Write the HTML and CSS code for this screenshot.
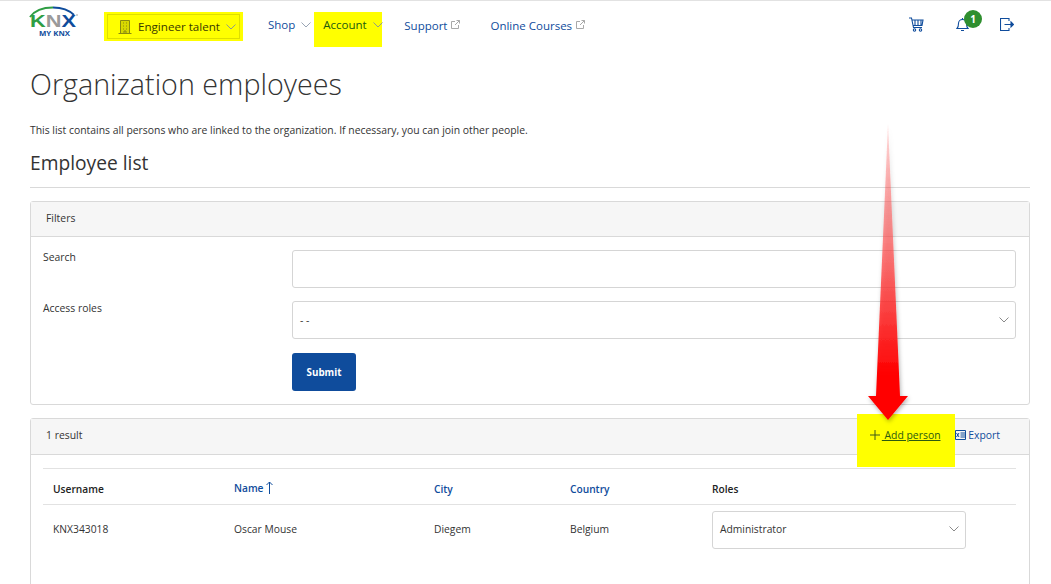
FILE: index.html
```html
<!DOCTYPE html>
<html lang="en">
<head>
    <meta charset="UTF-8">
    <title>Organization employees</title>
    <link rel="stylesheet" href="styles.css">
</head>
<body>
    <header class="topbar">
        <svg class="logo" width="50" height="34" viewBox="0 0 50 34">
            <path d="M1 11 C6 4 14 1.500 24 1.500" fill="none" stroke="#2f9e44" stroke-width="2"/>
            <path d="M24 1.500 C33 1.500 40 4 45 9" fill="none" stroke="#0f4c9c" stroke-width="2"/>
            <circle cx="48" cy="9" r="0.800" fill="#9a9a9a"/>
            <text class="logo-word" x="1" y="21" textLength="46" lengthAdjust="spacingAndGlyphs"><tspan fill="#2f9e44">K</tspan><tspan fill="#9a9a9a">N</tspan><tspan fill="#0f4c9c">X</tspan></text>
            <text class="logo-sub" x="10" y="30" textLength="31" lengthAdjust="spacingAndGlyphs">MY KNX</text>
        </svg>
        <div class="org-mark">
            <div class="org-select">
                <svg width="14" height="15" viewBox="0 0 14 15" fill="#d8d800" stroke="#8a8a10" stroke-width="1">
                    <path d="M2.500 14V1.500h9V14M0.500 14.500h13M5 4h1M8 4h1M5 7h1M8 7h1M5 10h1M8 10h1M6 14v-2h2v2"/>
                </svg>
                <span>Engineer talent</span>
                <svg class="chev" width="10" height="6" viewBox="0 0 10 6"><path d="M.5.500L5 5 9.500.500" fill="none" stroke="#8c9b8c"/></svg>
            </div>
        </div>
        <nav class="nav">
            <a class="nav-item">Shop <svg class="chev" width="10" height="6" viewBox="0 0 10 6"><path d="M.5.500L5 5 9.500.500" fill="none" stroke="#9aa5b5"/></svg></a>
            <a class="nav-item nav-mark">Account <svg class="chev" width="10" height="6" viewBox="0 0 10 6"><path d="M.5.500L5 5 9.500.500" fill="none" stroke="#8c9b8c"/></svg></a>
            <a class="nav-item nav-support">Support <svg class="ext" width="9" height="9" viewBox="0 0 9 9"><path d="M4 1.500H.5v7h7V5M4 5l4.500-4.500M5.500.500h3v3" fill="none" stroke="#a9a9a9"/></svg></a>
            <a class="nav-item nav-courses">Online Courses <svg class="ext" width="9" height="9" viewBox="0 0 9 9"><path d="M4 1.500H.5v7h7V5M4 5l4.500-4.500M5.500.500h3v3" fill="none" stroke="#a9a9a9"/></svg></a>
        </nav>
        <div class="tools">
            <svg class="cart" width="15" height="15" viewBox="0 0 15 15" fill="none" stroke="#0f4c9c" stroke-width="1.100">
                <path d="M0 1h2.500l2 9.500h8.500M3 3h11l-1 5.500H4.200M6 3v5.500M9 3v5.500M12 3v5.500"/>
                <circle cx="5.500" cy="13" r="1.200"/><circle cx="11.500" cy="13" r="1.200"/>
            </svg>
            <div class="bell">
                <svg width="13" height="14" viewBox="0 0 13 14" fill="none" stroke="#0f4c9c" stroke-width="1.100">
                    <path d="M1 10.500c1.500-1.500 1.500-3 1.500-5a4 4 0 0 1 8 0c0 2 0 3.500 1.500 5zM5 12.500h3M6.500 1v-1"/>
                </svg>
                <span class="badge">1</span>
            </div>
            <svg width="14" height="13" viewBox="0 0 14 13" fill="none" stroke="#0f4c9c" stroke-width="1.100">
                <path d="M9 3V.5H.5v12H9V10M4.500 6.500h7"/><path d="M11 4l2.500 2.500L11 9z" fill="#0f4c9c"/>
            </svg>
        </div>
    </header>

    <main class="page">
        <h1>Organization employees</h1>
        <p class="intro">This list contains all persons who are linked to the organization. If necessary, you can join other people.</p>
        <h2>Employee list</h2>

        <section class="card">
            <div class="card-head">Filters</div>
            <form class="filters">
                <label>Search</label>
                <div class="input"></div>
                <label>Access roles</label>
                <div class="input select">- -
                    <svg class="chev" width="10" height="6" viewBox="0 0 10 6"><path d="M.5.500L5 5 9.500.500" fill="none" stroke="#8a8a8a"/></svg>
                </div>
                <div></div>
                <div><button type="button" class="btn">Submit</button></div>
            </form>
        </section>

        <section class="card results">
            <div class="card-head result-head">
                <span>1 result</span>
                <div class="actions">
                    <a class="add"><svg width="10" height="10" viewBox="0 0 10 10"><path d="M5 0v10M0 5h10" stroke="#3d5a1a"/></svg>&nbsp;Add person</a>
                    <a class="export">
                        <svg width="11" height="10" viewBox="0 0 11 10" fill="none" stroke="#0f4c9c"><path d="M.5.500h10v9H.5zM5.500 3h5M5.500 5h5M5.500 7h5M1.500 3l2.500 4M4 3L1.500 7"/></svg>
                        Export</a>
                </div>
            </div>
            <div class="table-wrap">
                <table>
                    <thead>
                        <tr>
                            <th class="col-user">Username</th>
                            <th class="col-name sort"><span class="name-sort">Name <svg class="arrow" width="7" height="13" viewBox="0 0 7 13" fill="none" stroke="#0f4c9c"><path d="M3.500 13V1M.5 4l3-3 3 3"/></svg></span></th>
                            <th class="col-city sort">City</th>
                            <th class="col-country sort">Country</th>
                            <th>Roles</th>
                        </tr>
                    </thead>
                    <tbody>
                        <tr>
                            <td>KNX343018</td>
                            <td>Oscar Mouse</td>
                            <td>Diegem</td>
                            <td>Belgium</td>
                            <td class="role-cell"><div class="input role">Administrator
                                <svg class="chev" width="10" height="6" viewBox="0 0 10 6"><path d="M.5.500L5 5 9.500.500" fill="none" stroke="#8a8a8a"/></svg>
                            </div></td>
                        </tr>
                    </tbody>
                </table>
            </div>
        </section>
    </main>

    <svg class="big-arrow" width="60" height="310" viewBox="0 0 60 310">
        <defs>
            <linearGradient id="fade" x1="0" y1="0" x2="0" y2="1">
                <stop offset="0" stop-color="#ff3030" stop-opacity="0.15"/>
                <stop offset="0.35" stop-color="#ff5050" stop-opacity="0.6"/>
                <stop offset="0.85" stop-color="#ff0000"/>
            </linearGradient>
            <filter id="shadow" x="-30%" y="-5%" width="160%" height="110%">
                <feDropShadow dx="1" dy="2" stdDeviation="2" flood-color="#000" flood-opacity="0.3"/>
            </filter>
        </defs>
        <path d="M30 3 L18 275 H10 L30 299 L50 275 H42 Z" fill="url(#fade)" filter="url(#shadow)"/>
    </svg>
</body>
</html>
```

FILE: styles.css
```css
* {
    box-sizing: border-box;
}
html, body {
    height: 584px;
    overflow: hidden;
}
body {
    margin: 0;
    background: #fff;
    color: #333;
    font-family: "Open Sans", "Noto Sans", sans-serif;
    font-size: 10.4px;
    border-top: 1px solid #e2e2e2;
    position: relative;
}
.topbar {
    display: flex;
    align-items: flex-start;
    height: 50px;
    padding-left: 29px;
}
.logo {
    flex: none;
    margin-top: 5px;
}
.logo-word {
    font-family: "Liberation Sans", sans-serif;
    font-weight: 700;
    font-size: 17px;
}
.logo-sub {
    fill: #0f4c9c;
    font-size: 7.500px;
    font-weight: 700;
}
.org-mark {
    background: #ffff00;
    margin: 11px 0 0 25px;
    padding: 2px 3px;
    width: 139px;
    height: 29px;
}
.org-select {
    display: flex;
    align-items: center;
    gap: 6px;
    height: 25px;
    border: 1px solid #dede00;
    padding-left: 10px;
    color: #3a3a00;
    font-size: 11.600px;
    font-weight: 500;
}
.nav {
    display: flex;
    align-items: flex-start;
    margin-left: 25px;
}
.nav-item {
    color: #0f4c9c;
    font-size: 11.500px;
    font-weight: 500;
    height: 36px;
    padding-top: 16px;
    white-space: nowrap;
}
.nav-item .chev {
    margin-left: 3px;
    vertical-align: 1px;
}
.nav-mark {
    background: #ffff00;
    color: #1a5a10;
    width: 68px;
    height: 35px;
    margin: 11px 0 0 3px;
    padding: 5px 0 0 9px;
}
.nav-support {
    margin-left: 22px;
    padding-top: 17px;
}
.nav-courses {
    margin-left: 30px;
    padding-top: 17px;
}
.ext {
    vertical-align: 1px;
    margin-left: 1px;
}
.tools {
    display: flex;
    align-items: center;
    margin-left: auto;
    margin-right: 37px;
    margin-top: 16px;
    gap: 31px;
}
.cart {
    margin-right: 1px;
}
.bell {
    position: relative;
    height: 14px;
}
.badge {
    position: absolute;
    left: 8px;
    top: -8px;
    width: 18px;
    height: 18px;
    border-radius: 50%;
    background: #2f8f2f;
    color: #fff;
    font-size: 10px;
    font-weight: 700;
    line-height: 18px;
    text-align: center;
}
.page {
    padding: 0 21px 0 30px;
}
h1 {
    margin: 0;
    padding-top: 14px;
    font-size: 28.700px;
    line-height: 38px;
    font-weight: 300;
    color: #333;
}
.intro {
    margin: 20px 0 0;
    line-height: 15px;
}
h2 {
    margin: 11px 0 0;
    font-size: 19.200px;
    line-height: 27px;
    font-weight: 400;
    padding-bottom: 11px;
    border-bottom: 1px solid #d9d9d9;
}
.card {
    border: 1px solid #d9d9d9;
    border-radius: 3px;
    margin-top: 13px;
}
.card-head {
    background: #f6f6f6;
    border-bottom: 1px solid #d9d9d9;
    height: 35px;
    padding: 0 15px;
    line-height: 33px;
}
.filters {
    display: grid;
    grid-template-columns: 249px 724px;
    grid-auto-rows: min-content;
    padding: 13px 13px 13px 12px;
    row-gap: 13px;
}
.filters label {
    line-height: 14px;
}
.input {
    height: 38px;
    border: 1px solid #d5d5d5;
    border-radius: 3px;
    background: #fff;
    display: flex;
    align-items: center;
    justify-content: space-between;
    padding: 0 6px 0 7px;
}
.btn {
    display: block;
    width: 64px;
    height: 38px;
    margin-top: 1px;
    border: 0;
    border-radius: 3px;
    background: #0f4c9c;
    color: #fff;
    font: 700 9.800px "Open Sans", sans-serif;
}
.results {
    height: 200px;
}
.result-head {
    display: flex;
    justify-content: space-between;
    height: 36px;
    line-height: 33px;
}
.actions {
    display: flex;
    gap: 14px;
    margin-right: 14px;
    color: #0f4c9c;
}
.add {
    position: relative;
    color: #2c5a10;
    text-decoration: underline;
    z-index: 0;
}
.add::before {
    content: "";
    position: absolute;
    left: -13px;
    right: -14px;
    top: -5px;
    height: 53px;
    background: #ffff00;
    z-index: -1;
}
.add svg {
    margin-right: 1.500px;
}
.add svg, .export svg {
    vertical-align: -1px;
}
.table-wrap {
    padding: 13px 13px 0 12px;
}
table {
    border-collapse: collapse;
    width: 973px;
    table-layout: fixed;
}
th {
    text-align: left;
    font-weight: 600;
    font-size: 10.200px;
    height: 36px;
    padding: 5px 10px 0;
    color: #222;
    border-top: 1px solid #e2e2e2;
    border-bottom: 1px solid #e2e2e2;
}
th.sort {
    color: #0f4c9c;
}
.col-user { width: 181px; }
.col-name { width: 200px; }
.col-city { width: 136px; }
.col-country { width: 142px; }
.name-sort {
    position: relative;
    top: -1px;
}
.arrow {
    vertical-align: -2px;
}
td {
    font-size: 10.300px;
    padding: 6px 10px 8px;
    height: 50px;
}
td.role-cell {
    padding-bottom: 6px;
}
.role {
    width: 254px;
    padding-bottom: 2px;
}
.big-arrow {
    position: absolute;
    left: 858px;
    top: 120px;
}
```
